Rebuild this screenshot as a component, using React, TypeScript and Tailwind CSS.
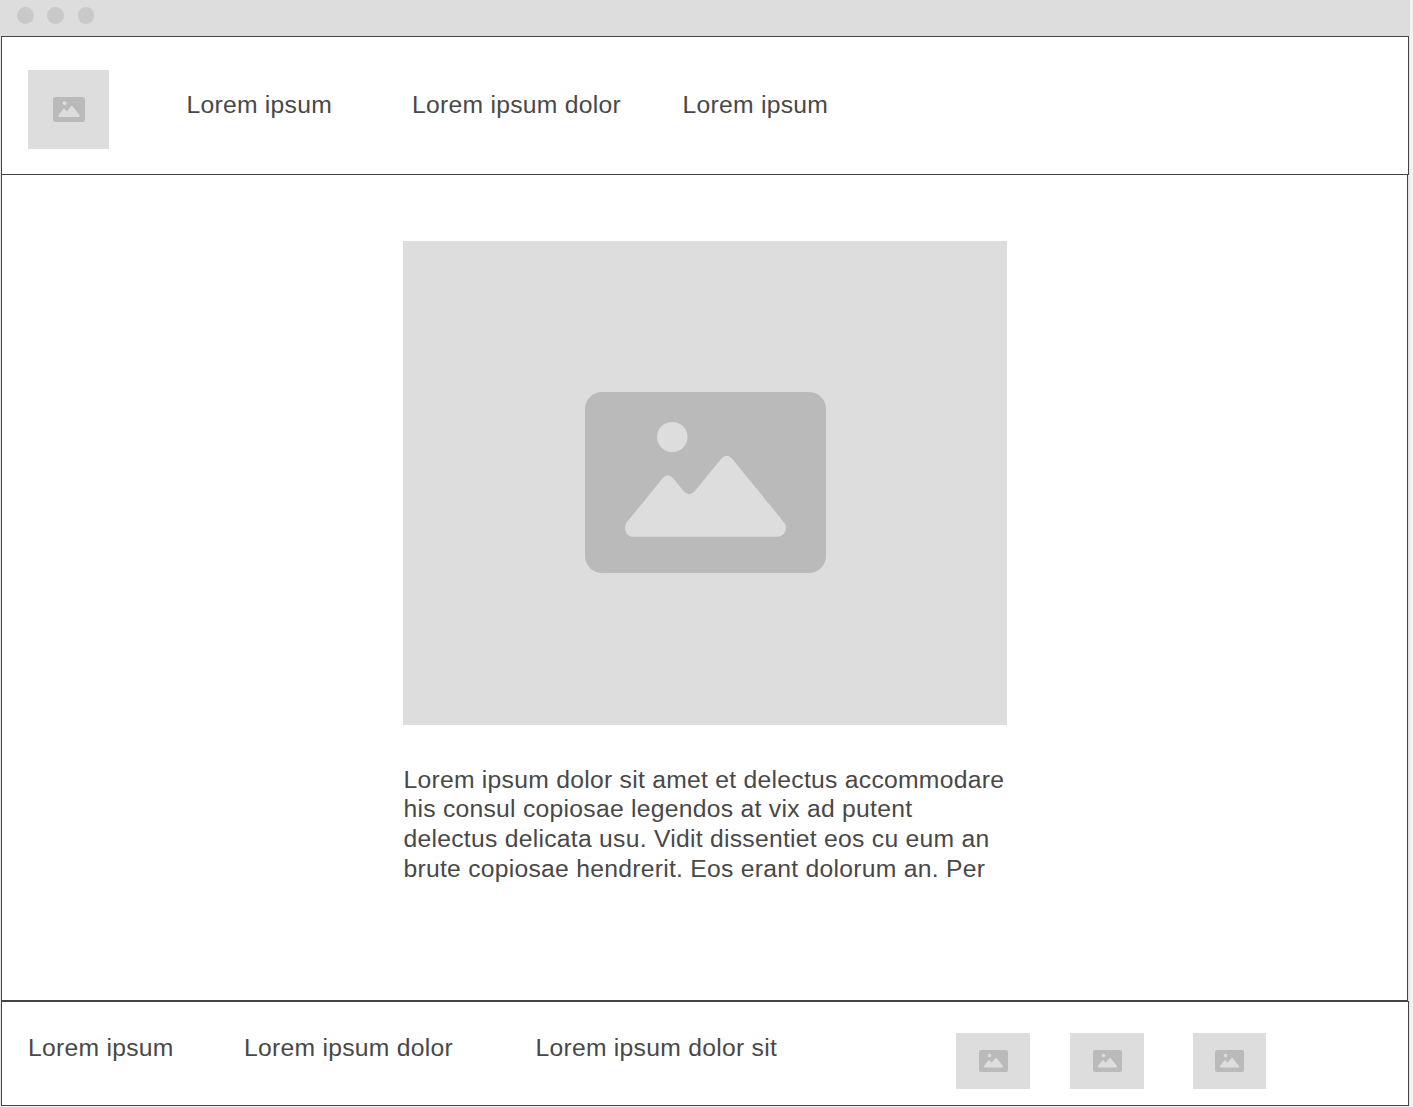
type PictureProps = { frame: string; icon: string };

/** Grey image placeholder with a centred picture glyph. */
function Picture({ frame, icon }: PictureProps) {
  return (
    <div className={`flex shrink-0 justify-center bg-[#dddddd] ${frame}`}>
      <svg viewBox="0 0 241 181" preserveAspectRatio="none" className={`shrink-0 ${icon}`}>
        <rect width="241" height="181" rx="17" fill="#bababa" />
        <circle cx="87.3" cy="45.1" r="15.2" fill="#dddddd" />
        <path
          fill="#dddddd"
          d="M42 130 L77.7 86.2 Q82.7 80.4 88 86.2 L98.7 99.3 Q104 105.2 109.7 99.3 L136 67 Q141.7 60.6 147.3 67 L199.3 130.7 C203.2 136 199.8 144.8 192.3 144.8 H48.3 C41 144.8 37.6 136 42 130 Z"
        />
      </svg>
    </div>
  );
}

export default function App() {
  return (
    <div className="h-[1107px] w-[1413px] overflow-hidden bg-[#f3f3f3] font-['Liberation_Sans',Arial,sans-serif] text-[24.7px] leading-[29.7px] tracking-[0.27px] text-[#484848]">
      <div className="flex h-[1106px] w-[1410px] flex-col bg-[#e6e6e6]">
        <div className="flex h-9 shrink-0 gap-[13px] bg-[#dddddd] pt-[7px] pl-[17px]">
          <span className="size-[17px] rounded-full bg-[#c9c9c9]" />
          <span className="size-[17px] rounded-full bg-[#c9c9c9]" />
          <span className="ml-px h-[17px] w-4 rounded-full bg-[#c9c9c9]" />
        </div>

        <header className="ml-px flex h-[139px] w-[1408px] border border-[#444444] bg-white pt-[33px] pl-[26px]">
          <Picture frame="h-[79px] w-[81px] pl-px" icon="mt-[27px] h-[25px] w-8" />
          <nav className="flex pt-5 whitespace-nowrap">
            <a className="ml-[77.4px] w-[225.6px]">Lorem ipsum</a>
            <a className="w-[270.5px]">Lorem ipsum dolor</a>
            <a>Lorem ipsum</a>
          </nav>
        </header>

        <main className="ml-px flex h-[826px] w-[1407px] flex-col items-center border-x border-b border-[#444444] bg-white pt-[66px]">
          <Picture frame="h-[484px] w-[604px] pl-px" icon="mt-[151px] h-[181px] w-[241px]" />
          <p className="mt-[39.7px] w-[604px] pl-[0.9px] whitespace-nowrap">
            Lorem ipsum dolor sit amet et delectus accommodare
            <br />
            his consul copiosae legendos at vix ad putent
            <br />
            delectus delicata usu. Vidit dissentiet eos cu eum an
            <br />
            brute copiosae hendrerit. Eos erant dolorum an. Per
          </p>
        </main>

        <footer className="ml-px flex h-[105px] w-[1408px] border border-[#444444] bg-white pt-[31px] pl-[26px] whitespace-nowrap">
          <a className="w-[216px]">Lorem ipsum</a>
          <a className="w-[291.4px]">Lorem ipsum dolor</a>
          <a className="w-[420.6px]">Lorem ipsum dolor sit</a>
          <Picture frame="h-14 w-[74px] pl-px" icon="mt-[17px] h-[22px] w-[29px]" />
          <Picture frame="ml-10 h-14 w-[74px] pl-px" icon="mt-[17px] h-[22px] w-[29px]" />
          <Picture frame="ml-[49px] h-14 w-[73px]" icon="mt-[17px] h-[22px] w-[29px]" />
        </footer>
      </div>
    </div>
  );
}
